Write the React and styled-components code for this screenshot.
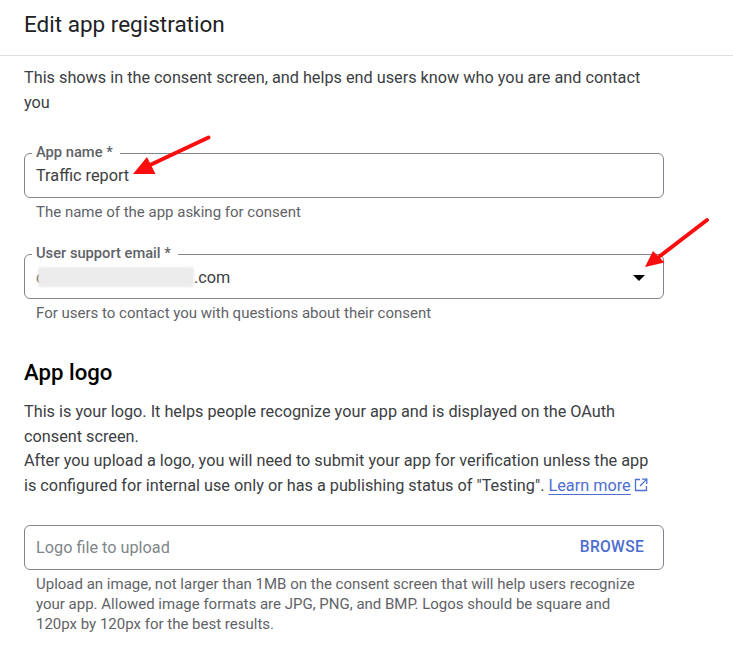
import styled, { createGlobalStyle } from "styled-components";

const Global = createGlobalStyle`
  html, body { margin: 0; padding: 0; background: #fff; }
  body { font-family: Roboto, "Liberation Sans", sans-serif; color: #3c4043; }
`

const Page = styled.div`
  position: relative;
  width: 733px;
  height: 656px;
  overflow: hidden;
`
const Header = styled.header`
  height: 56px;
  box-sizing: border-box;
  padding: 9px 24px 0;
  border-bottom: 1px solid #e0e0e0;
`
const Title = styled.h1`
  margin: 0;
  font-size: 22.5px;
  line-height: 30px;
  font-weight: 400;
  color: #202124;
`
const Body = styled.main`
  width: 640px;
  padding: 10px 0 0 24px;
`
const Text = styled.p`
  margin: ${(p) => p.$top || 0}px 0 0;
  font-size: 16.25px;
  line-height: 24.6px;
  color: #3c4043;
`
const Field = styled.div`
  position: relative;
  box-sizing: border-box;
  height: 45px;
  margin-top: ${(p) => p.$top}px;
  padding: ${(p) => p.$plain ? "0 19px 0 11px" : "12px 11px 0"};
  display: flex;
  align-items: ${(p) => p.$plain ? "center" : "flex-start"};
  justify-content: space-between;
  border: 1px solid #80868b;
  border-radius: 6px;
  font-size: 16.25px;
  line-height: 19px;
  color: #3c4043;
`
const FieldLabel = styled.label`
  position: absolute;
  top: -10px;
  left: 7px;
  padding: 0 7px 0 4px;
  background: #fff;
  font-size: 14.7px;
  line-height: 17px;
  font-weight: 500;
  color: #5f6368;
`
const Hint = styled.div`
  margin-top: ${(p) => p.$top || 6}px;
  padding: 0 20px 0 12px;
  font-size: 15px;
  line-height: ${(p) => p.$lh || 17}px;
  color: #5f6368;
`
const Email = styled.span`
  display: flex;
  align-items: center;
  flex: 1;
`
const Hidden = styled.span`
  display: block;
  width: 2px;
`
const Blur = styled.span`
  display: block;
  width: 156px;
  height: 20px;
  border-radius: 2px;
  background: #ececec;
  filter: blur(1px);
`
const Caret = styled.span`
  align-self: center;
  margin: 0 7px 0 0;
  width: 0;
  height: 0;
  border-left: 6.5px solid transparent;
  border-right: 6.5px solid transparent;
  border-top: 6.5px solid #000;
  transform: translateY(-5px);
`
const Heading = styled.h2`
  margin: 36px 0 0;
  font-size: 22.2px;
  line-height: 28px;
  font-weight: 500;
  color: #000;
`
const Learn = styled.a`
  color: #4e6ed0;
  text-decoration: underline;
  text-underline-offset: 3px;
`
const External = styled.svg`
  width: 14px;
  height: 14px;
  margin-left: 3px;
  vertical-align: -1px;
`
const Placeholder = styled.span`
  color: #80868b;
`
const Browse = styled.span`
  font-size: 15.6px;
  font-weight: 500;
  letter-spacing: 0.3px;
  color: #4e6ed0;
`
const Arrows = styled.svg`
  position: absolute;
  top: 0;
  left: 0;
  pointer-events: none;
`

export default function App() {
  return (
    <Page>
      <Global />
      <Header>
        <Title>Edit app registration</Title>
      </Header>
      <Body>
        <Text>This shows in the consent screen, and helps end users know who you are and contact you</Text>
        <Field $top={38}>
          <FieldLabel>App name *</FieldLabel>
          Traffic report
        </Field>
        <Hint>The name of the app asking for consent</Hint>
        <Field $top={33}>
          <FieldLabel>User support email *</FieldLabel>
          <Email>
            <Hidden>c</Hidden>
            <Blur />
            .com
          </Email>
          <Caret />
        </Field>
        <Hint>For users to contact you with questions about their consent</Hint>
        <Heading>App logo</Heading>
        <Text $top={14}>
          This is your logo. It helps people recognize your app and is displayed on the OAuth consent screen.
          <br />
          After you upload a logo, you will need to submit your app for verification unless the app is configured for internal use only or has a publishing status of "Testing". <Learn>Learn more</Learn>
          <External viewBox="0 0 14 14" fill="none" stroke="#4e6ed0" strokeWidth="1.3">
            <path d="M6 1.5H1.5v11h11V8" />
            <path d="M8 1.2h4.8V6M12.6 1.4L6 8" />
          </External>
        </Text>
        <Field $top={26} $plain>
          <Placeholder>Logo file to upload</Placeholder>
          <Browse>BROWSE</Browse>
        </Field>
        <Hint $top={4} $lh={20}>
          Upload an image, not larger than 1MB on the consent screen that will help users recognize your app. Allowed image formats are JPG, PNG, and BMP. Logos should be square and 120px by 120px for the best results.
        </Hint>
      </Body>
      <Arrows width="733" height="656" viewBox="0 0 733 656">
        <path d="M208.500 137.500L150 165" stroke="#fb0d0d" strokeWidth="4" strokeLinecap="round" />
        <path d="M133 174L147 157L155.500 174Z" fill="#fb0d0d" />
        <path d="M707 220L660 256" stroke="#fb0d0d" strokeWidth="4" strokeLinecap="round" />
        <path d="M645 267L653 251L664.500 262.500Z" fill="#fb0d0d" />
      </Arrows>
    </Page>
  )
}
